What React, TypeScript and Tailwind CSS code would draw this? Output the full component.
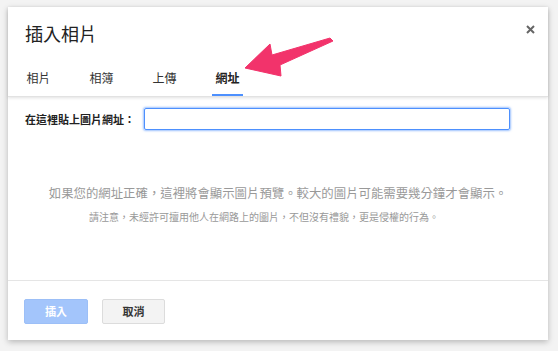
import React, { useState } from 'react';

const tabs = ['相片', '相簿', '上傳', '網址'];

const font = { fontFamily: '"Noto Sans CJK TC", "Noto Sans", "Liberation Sans", sans-serif' };

const App: React.FC = () => {
  const [active, setActive] = useState<number>(3);
  const [url, setUrl] = useState<string>('');

  return (
    <div className="relative w-[558px] h-[351px] bg-[#f3f3f3] pt-[7px] pl-[8px]" style={font}>
      <div className="flex flex-col w-[540px] h-[333px] bg-white shadow-[0_2px_6px_rgba(0,0,0,0.25)]">
        {/* header */}
        <div className="relative border-b border-[#e2e2e2] shadow-[0_1px_3px_rgba(0,0,0,0.12)] pl-[15px]">
          <div className="pt-[13px] pl-[2px] text-[18px] leading-[26px] text-[#222]">插入相片</div>
          <button className="absolute right-[12px] top-[16px] w-[12px] h-[12px] flex items-center justify-center">
            <svg width="9" height="9" viewBox="0 0 9 9">
              <path d="M1 1L8 8M8 1L1 8" stroke="#666" strokeWidth="2" />
            </svg>
          </button>
          <div className="flex gap-[32px] mt-[24px]">
            {tabs.map((tab, i) => (
              <div
                key={tab}
                onClick={() => setActive(i)}
                className={
                  i === active
                    ? 'w-[31px] text-center text-[12px] leading-[16px] pb-[8px] border-b-2 border-[#4d90fe] font-bold text-[#222] cursor-pointer'
                    : 'w-[31px] text-center text-[12px] leading-[16px] pb-[8px] border-b-2 border-transparent text-[#333] cursor-pointer'
                }
              >
                {tab}
              </div>
            ))}
          </div>
        </div>

        {/* body */}
        <div className="flex-1 flex flex-col pl-[17px] pt-[11px]">
          <div className="flex items-center">
            <label className="w-[119px] text-[11px] font-bold text-[#222]">在這裡貼上圖片網址：</label>
            <input
              autoFocus
              value={url}
              onChange={(e) => setUrl(e.target.value)}
              className="w-[366px] h-[22px] px-[3px] text-[12px] border border-[#4d90fe] rounded-[2px] shadow-[0_0_2px_1px_rgba(77,144,254,0.55)] outline-none"
            />
          </div>
          <div className="mt-[55px] pr-[17px] text-center text-[12.4px] leading-[16px] text-[#999]">
            如果您的網址正確，這裡將會顯示圖片預覽。較大的圖片可能需要幾分鐘才會顯示。
          </div>
          <div className="mt-[9px] pr-[45px] text-center text-[10px] leading-[14px] text-[#999]">
            請注意，未經許可擅用他人在網路上的圖片，不但沒有禮貌，更是侵權的行為。
          </div>
        </div>

        {/* footer */}
        <div className="flex gap-[14px] border-t border-[#e5e5e5] pl-[16px] pt-[18px] pb-[16px]">
          <button className="w-[64px] h-[25px] rounded-[2px] bg-[#a3c5fb] border border-[#9cbff7] text-[11px] font-bold text-white">
            插入
          </button>
          <button className="w-[63px] h-[25px] rounded-[2px] bg-[#f3f3f3] border border-[#dcdcdc] text-[11px] font-bold text-[#333]">
            取消
          </button>
        </div>
      </div>

      {/* annotation arrow */}
      <svg className="absolute left-0 top-0 pointer-events-none" width="558" height="351">
        <polygon
          points="245,68 270,44 272,55 330,38 333,41 280,65 281,76"
          fill="#f2336b"
          strokeLinejoin="round"
          stroke="#f2336b"
          strokeWidth="1"
        />
      </svg>
    </div>
  );
};

export default App;
